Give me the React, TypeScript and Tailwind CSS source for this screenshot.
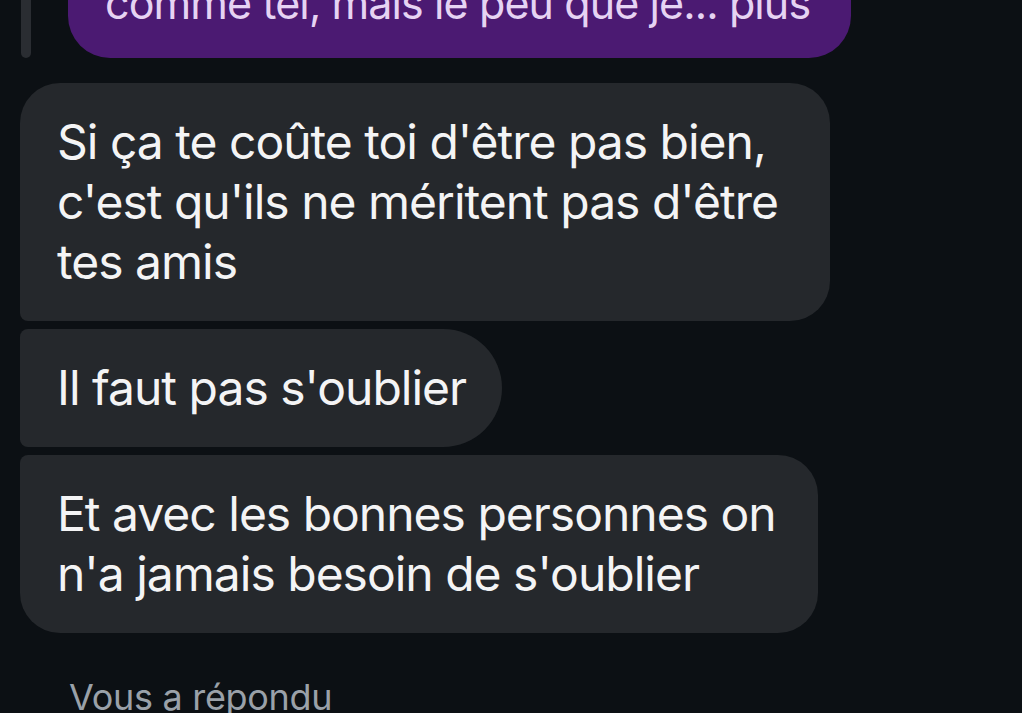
import React from "react";

const font = { fontFamily: "Inter, 'Noto Sans', sans-serif" };

export default function App() {
  return (
    <div
      className="w-[1022px] h-[713px] overflow-hidden bg-[#0c1014] flex flex-col"
      style={font}
    >
      <div className="flex items-end h-[58px]">
        <div className="ml-[21px] w-[10px] h-[100px] rounded-full bg-[#2a2d32]" />
        <div className="ml-[37px] w-[783px] h-[160px] shrink-0 bg-[#4b1a72] rounded-[42px] pl-[37px] pt-[77px] text-[43px] leading-[56px] text-[#e6d3f3] whitespace-nowrap tracking-[-0.9px]">
          comme tel, mais le peu que je... plus
        </div>
      </div>

      <div className="mt-[25px] pl-[20px] flex flex-col items-start gap-[8px] text-[48px] leading-[60px] text-[#f4f4f5] tracking-[-1px]">
        <div className="w-[810px] bg-[#25282c] rounded-[40px] rounded-bl-[8px] pl-[37px] py-[29px]">
          <div>Si ça te coûte toi d'être pas bien,</div>
          <div>c'est qu'ils ne méritent pas d'être</div>
          <div>tes amis</div>
        </div>
        <div className="w-[482px] bg-[#25282c] rounded-r-[60px] rounded-l-[8px] pl-[37px] py-[29px] whitespace-nowrap">
          Il faut pas s'oublier
        </div>
        <div className="w-[798px] bg-[#25282c] rounded-[40px] rounded-tl-[8px] pl-[37px] py-[29px]">
          <div>Et avec les bonnes personnes on</div>
          <div>n'a jamais besoin de s'oublier</div>
        </div>
      </div>

      <div className="mt-[42px] pl-[69px] text-[36px] leading-[44px] text-[#9aa1a9] whitespace-nowrap tracking-[-0.3px]">
        Vous a répondu
      </div>
    </div>
  );
}
